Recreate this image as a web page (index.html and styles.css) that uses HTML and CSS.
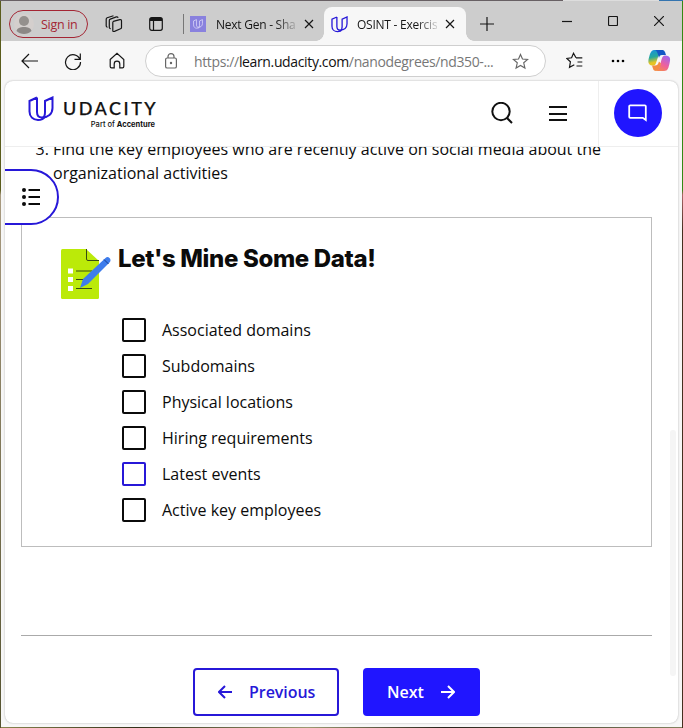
FILE: index.html
```html
<!DOCTYPE html>
<html lang="en">
<head>
<meta charset="utf-8">
<title>OSINT - Exercise</title>
<link rel="stylesheet" href="styles.css">
</head>
<body>
<svg width="0" height="0" class="defs" aria-hidden="true">
  <symbol id="u-logo" viewBox="0 0 26 26"><path d="M9 1.500 1.500 5v10.500c0 5 3.500 8.500 8.500 8.500 3.500 0 6-1.500 7.500-3.500M9 1.500V16c0 3.500 2 5.500 5 5.500 6 0 10.500-3.500 10.500-9.500V1.500L17 5v11c0 3.500-1 5.500-3 5.500"/></symbol>
  <symbol id="x" viewBox="0 0 10 10"><path d="m1 1 8 8M9 1 1 9"/></symbol>
  <symbol id="star" viewBox="0 0 18 18"><path d="m9 1.500 2.100 4.900 5.400.5-4.100 3.500 1.300 5.500L9 13.200l-4.700 2.700 1.300-5.500-4.100-3.500 5.400-.5z"/></symbol>
</svg>
<div class="window">
  <div class="tabs">
    <div class="signin"><svg class="avatar" viewBox="0 0 20 20"><circle cx="10" cy="10" r="10" fill="#d4cfcd"/><circle cx="10" cy="7" r="5" fill="#94908d"/><path d="M2.500 17c.5-5.500 14.500-5.500 15 0-4 4-11 4-15 0z" fill="#8c8886"/></svg><span>Sign in</span></div>
    <svg class="ico collections" width="18" height="18" viewBox="0 0 18 18"><path d="m8.300 6.300 6.500-1.700q1.700-.3 1.700 1.200v6.700q0 1-1 1.300l-6 2.600q-1.700.5-1.700-1V7.500q0-.9.900-1.200M5.800 13.800 5 13.500q-.7-.4-.7-1.300V5.500q0-1 1-1.400l6-2.200q1.300-.3 1.900.8M2.600 12.300 1.900 12q-.7-.4-.7-1.300V4.200q0-1 1-1.400L8.500.8"/></svg>
    <svg class="ico vertical" width="14" height="14" viewBox="0 0 14 14"><rect x=".7" y=".7" width="12.600" height="12.600" rx="2"/><path d="M1 2.500h12" stroke-width="3"/><path d="M4.500 4v9"/></svg>
    <i class="sep"></i>
    <div class="tab idle"><span class="fav"><svg width="10" height="10"><use href="#u-logo"/></svg></span><span class="name">Next Gen - Sha</span><svg class="ico" width="10" height="10"><use href="#x"/></svg></div>
    <div class="tab active"><svg class="blue" width="17" height="17"><use href="#u-logo"/></svg><span class="name">OSINT - Exercis</span><svg class="ico" width="10" height="10"><use href="#x"/></svg></div>
    <svg class="ico plus" width="14" height="14" viewBox="0 0 14 14"><path d="M7 0v14M0 7h14"/></svg>
    <div class="controls">
      <svg class="ico" width="10" height="10"><path d="M0 5.500h10"/></svg>
      <svg class="ico" width="10" height="10"><rect x=".5" y=".5" width="9" height="9" rx="1"/></svg>
      <svg class="ico" width="10" height="10" viewBox="0 0 10 10"><path d="m0 0 10 10M10 0 0 10"/></svg>
    </div>
  </div>
  <div class="toolbar">
    <svg class="ico back" width="17" height="16" viewBox="0 0 17 16"><path d="M17 8H1.500M8 1 1 8l7 7"/></svg>
    <svg class="ico reload" width="18" height="18" viewBox="0 0 18 18"><path d="M16 7.500A7.500 7.500 0 1 0 16.500 10M16.300 1.500v5.800h-5.800"/></svg>
    <svg class="ico home" width="16" height="17" viewBox="0 0 16 17"><path d="M1.200 7.500 8 1.200l6.800 6.300v7q0 1.300-1.300 1.300h-2.700V12a2.800 2.800 0 0 0-5.600 0v3.800H2.500q-1.300 0-1.300-1.300z"/></svg>
    <div class="address">
      <svg class="ico lock" width="12" height="16" viewBox="0 0 12 16"><rect x=".6" y="5" width="10.800" height="10" rx="1.600"/><path d="M3 5V3.600a3 3 0 0 1 6 0V5"/><circle cx="6" cy="10" r=".6"/></svg>
      <span class="url">https://<b>learn.udacity.com</b>/nanodegrees/nd350-...</span>
      <svg class="ico" width="17" height="17"><use href="#star"/></svg>
    </div>
    <svg class="ico favs" width="17" height="17" viewBox="0 0 17 17"><path d="M10 5.800 7.500 1.300 5.600 5.800.8 6.400l3.600 3.400-.9 5.500 4.800-2.500M10 5.800h6.300M11.500 10h4.800M10.500 14h5.800"/></svg>
    <svg class="dots" width="14" height="4"><circle cx="2" cy="2" r="1.300"/><circle cx="7" cy="2" r="1.300"/><circle cx="12" cy="2" r="1.300"/></svg>
    <svg class="copilot" width="23" height="21" viewBox="0 0 23 21">
      <defs><linearGradient id="ca" x2=".2" y2="1"><stop stop-color="#168fe2"/><stop offset=".5" stop-color="#26a99c"/><stop offset=".85" stop-color="#e6c525"/></linearGradient><linearGradient id="cb" x1=".7" x2=".2" y2="1"><stop stop-color="#a565ed"/><stop offset=".55" stop-color="#ef609c"/><stop offset="1" stop-color="#f58a4e"/></linearGradient></defs>
      <path fill="url(#ca)" d="M6 0h8c-2 1-3 3-4 7l-2 6c-.6 2-1.500 2.500-3 2.500C-.5 15.500 0 11 1 7.500S3 0 6 0z"/><path fill="#1557c5" d="M7 0h7c2 0 3 1 4 5h-4c-2 0-2.500 1-3 3C10 5 9.500 1 7 0z"/>
      <path fill="url(#cb)" d="M17 5.500c6 0 5.500 4 4.500 8S20 21 16 21H8c2.500-1 3.500-4 4.500-7.500S14 5.500 17 5.500z"/><path fill="#f48b45" d="M4 15.500h3c2 0 3-1 4-4l2 2c-1 4-2.500 7.500-5 7.500-3 0-3-3-4-5.500z"/>
    </svg>
  </div>
  <main class="page">
    <header>
      <svg class="blue brandmark" width="26" height="26"><use href="#u-logo"/></svg>
      <div class="brand"><div class="word">UDACITY</div><div class="part">Part of <b>Accenture</b></div></div>
      <svg class="search" width="22" height="22" viewBox="0 0 22 22"><circle cx="10" cy="9.500" r="8.700"/><path d="m16 16 5 5"/></svg>
      <svg class="burger" width="18" height="16" viewBox="0 0 18 16"><path d="M0 2h18M0 9h18M0 15h18"/></svg>
      <div class="chatcell"><div class="chat"><svg width="20" height="18" viewBox="0 0 20 18"><path d="M2.200 1.300h14.600q1 0 1 1V16l-3-2.200H2.200q-1 0-1-1V2.300q0-1 1-1z"/></svg></div></div>
    </header>
    <div class="content">
      <ol start="3"><li>Find the key employees who are recently active on social media about the organizational activities</li></ol>
      <section class="card">
        <div class="cardhead">
          <svg width="50" height="51" viewBox="0 0 50 51"><path fill="#bbea09" d="M1.500 0H25l13 12v36.500q0 1.500-1.500 1.500h-35Q0 50 0 48.500v-47Q0 0 1.500 0z"/><path fill="none" stroke="#384b12" d="M25.500 0v10q0 1.500 1.500 1.500h11M15 22h16M15 30.500h9M15 39.500h16"/><path fill="#fff" d="M7 19.500h5v5H7zM7 28h5v5H7zM7 37h5v5H7z"/><path fill="#3d7cec" d="m19 39 3-9L44.500 9q2-2 4 0t0 4.500L27 35z"/><path stroke="#173c8d" d="m43 10.500 4.500 4.500"/></svg>
          <h1>Let's Mine Some Data!</h1>
        </div>
        <div class="tasks">
          <label><i></i>Associated domains</label>
          <label><i></i>Subdomains</label>
          <label><i></i>Physical locations</label>
          <label><i></i>Hiring requirements</label>
          <label class="hover"><i></i>Latest events</label>
          <label><i></i>Active key employees</label>
        </div>
      </section>
      <nav>
        <button class="prev"><svg width="14" height="14" viewBox="0 0 14 14"><path d="M14 7H1.500M7 1 1 7l6 6"/></svg><span>Previous</span></button>
        <button class="next"><span>Next</span><svg width="14" height="14" viewBox="0 0 14 14"><path d="M0 7h12.500M7 1l6 6-6 6"/></svg></button>
      </nav>
    </div>
    <div class="drawer"><svg width="18" height="18" viewBox="0 0 18 18"><path d="M6.500 2H18M6.500 9H18M6.500 16H18"/><g><circle cx="2" cy="2" r="2"/><circle cx="2" cy="9" r="2"/><circle cx="2" cy="16" r="2"/></g></svg></div>
    <div class="scroll"></div>
  </main>
</div>
</body>
</html>
```
FILE: styles.css
```css
* { box-sizing: border-box; }
body { margin: 0; height: 728px; padding: 1px; overflow: hidden; font-family: "Open Sans", "Noto Sans", sans-serif; background: linear-gradient(#686064, #686064) 0 0 / 563px 1px no-repeat, linear-gradient(90deg, #ddd 96px, #3474af 96px) 563px 0 / 120px 1px no-repeat, linear-gradient(#348913 0 190px, #a66 195px, #463020 230px) 682px 0 / 1px 100% no-repeat, linear-gradient(#5a5c1c 0 190px, #a89a80 195px, #54522f) 0 0 / 1px 100% no-repeat, linear-gradient(90deg, #8b854f, #343019 20%, #9d9870 45%, #27221a 65%, #84815f); }
svg { display: block; flex: none; }
.defs { position: absolute; }
.window { height: 726px; background: #f7f7f7; display: flex; flex-direction: column; }
.ico { fill: none; stroke: #161616; stroke-width: 1.200; }
.blue { fill: none; stroke: #2718d8; stroke-width: 2; }
.tabs { height: 40px; background: #cdcdcd; display: flex; align-items: center; padding: 6px 0 0 8px; }
.signin { width: 79px; height: 28px; border: 1px solid #a42634; border-radius: 14px; display: flex; align-items: center; padding-left: 4px; font-size: 12.500px; color: #a42634; letter-spacing: -.3px; white-space: nowrap; }
.avatar { width: 20px; height: 20px; margin-right: 7px; }
.collections { margin-left: 17px; }
.vertical { margin-left: 26px; }
.sep { width: 1px; height: 20px; background: #777; margin-left: 20px; }
.tab { height: 34px; display: flex; align-items: center; font-size: 12px; color: #161616; }
.idle { width: 140px; padding-left: 6px; }
.fav { width: 16px; height: 16px; background: #8981de; display: grid; place-items: center; margin-right: 10px; }
.fav svg { fill: none; stroke: #ddd9fa; stroke-width: 2; }
.name { width: 80px; white-space: nowrap; margin-right: 8px; letter-spacing: -.25px; -webkit-mask-image: linear-gradient(90deg, #000 60px, transparent 84px); mask-image: linear-gradient(90deg, #000 60px, transparent 84px); }
.active { width: 142px; padding-left: 7px; background: #f7f7f7; border-radius: 8px 8px 0 0; position: relative; }
.active::before, .active::after { content: ""; position: absolute; bottom: 0; width: 8px; height: 8px; }
.active::before { left: -8px; background: radial-gradient(circle at 0 0, transparent 7.500px, #f7f7f7 8px); }
.active::after { right: -8px; background: radial-gradient(circle at 100% 0, transparent 7.500px, #f7f7f7 8px); }
.active > .blue { margin-right: 9px; }
.plus { margin-left: 14px; }
.controls { display: flex; gap: 36px; margin: -6px 18px 0 auto; }
.toolbar { height: 40px; display: flex; align-items: center; padding: 0 0 1px 20px; }
.reload { margin-left: 26px; }
.home { margin-left: 27px; }
.address { margin-left: 20px; width: 401px; height: 32px; margin-top: 1px; border: 1px solid #cfcfcf; border-radius: 16px; background: #fff; display: flex; align-items: center; padding: 0 16px 0 19px; }
.address .ico { stroke: #666; }
.url { font-size: 14px; color: #777; margin: 0 auto 0 17px; white-space: nowrap; letter-spacing: -.36px; }
.url b { font-weight: 400; color: #111; }
.favs { margin-left: 20px; }
.dots { margin-left: 28px; }
.copilot { margin-left: 23px; }
.page { margin: 0 4px; width: 673px; height: 642px; background: #fff; border-radius: 8px; position: relative; overflow: hidden; box-shadow: 0 0 2px #aaa; }
header { height: 66px; border-bottom: 1px solid #eee; display: flex; align-items: center; }
.brandmark { margin: -10px 0 0 23px; }
.brand { width: 95px; margin-left: 9px; }
.word { font: 500 18px/20px Lato, sans-serif; color: #111; -webkit-text-stroke: .25px #111; letter-spacing: 2.500px; margin-top: 1px; }
.part { font: 500 7.500px/10px Inter, sans-serif; text-align: right; padding-right: 3px; margin-top: 2px; white-space: nowrap; color: #111; }
.search { margin: -1px 0 0 333px; fill: none; stroke: #111; stroke-width: 2; }
.burger { margin: -2px 0 0 36px; stroke: #111; stroke-width: 2; }
.chatcell { margin-left: auto; width: 80px; height: 65px; border-left: 1px solid #eee; padding: 8px 0 0 15px; }
.chat { width: 48px; height: 48px; border-radius: 50%; background: #2015ff; display: grid; place-items: center; }
.chat svg { fill: none; stroke: #fff; stroke-width: 1.800; }
.content { height: 576px; overflow: hidden; padding: 0 26px 0 16px; }
ol { margin: -10px 0 0; padding: 0 0 0 32px; font-size: 16px; line-height: 24px; color: #0b0b0b; }
.card { margin-top: 32px; height: 330px; border: 1px solid #bdbdbd; padding: 31px 0 0 39px; }
.cardhead { display: flex; height: 69px; }
h1 { margin: -5px 0 0 7px; font: 800 24px/30px Inter, sans-serif; color: #0b0b0b; white-space: nowrap; letter-spacing: -.35px; }
.tasks { padding-left: 61px; display: grid; gap: 12px; }
label { height: 24px; display: flex; align-items: center; gap: 16px; font-size: 16px; color: #0b0b0b; }
label i { width: 24px; height: 24px; border: 2px solid #0b0b0b; border-radius: 2px; }
.hover i { border-color: #2718d8; }
nav { margin-top: 88px; border-top: 1px solid #aaa; padding: 32px 0 0 172px; display: flex; gap: 24px; }
button { height: 48px; border: 2px solid #2718d8; border-radius: 4px; background: #fff; color: #2718d8; font: 600 16px/24px "Open Sans", sans-serif; display: flex; align-items: center; padding: 0 22px; }
button svg { fill: none; stroke: currentColor; stroke-width: 2; }
.prev { width: 146px; gap: 17px; padding-left: 23px; letter-spacing: -.05px; }
.next { width: 117px; gap: 17px; background: #2015ff; border-color: #2015ff; color: #fff; }
.drawer { position: absolute; left: -2px; top: 88px; width: 56px; height: 56px; border: 2px solid #2718d8; border-radius: 0 28px 28px 0; background: #fff; padding: 17px 0 0 17px; }
.drawer svg { stroke: #0b0b0b; stroke-width: 2; }
.drawer g { stroke: none; fill: #0b0b0b; }
.scroll { position: absolute; right: 2px; top: 349px; width: 6px; height: 246px; border-radius: 3px; background: #f5f5f5; }
```
